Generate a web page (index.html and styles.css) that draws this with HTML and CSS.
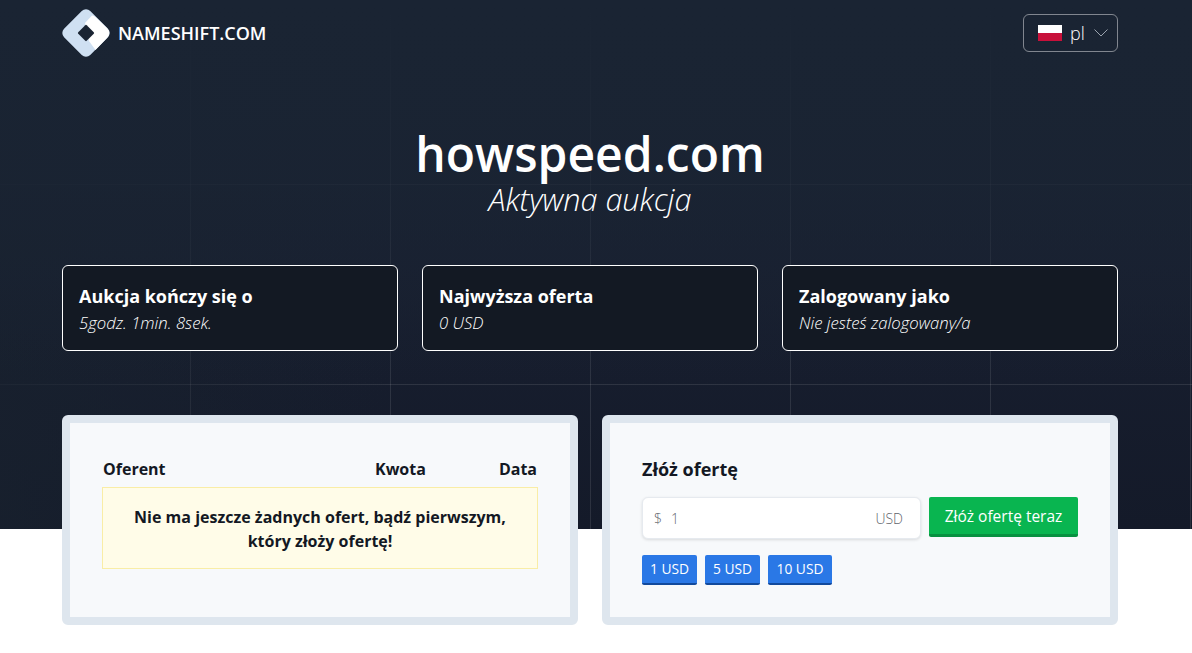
FILE: index.html
```html
<!DOCTYPE html>
<html lang="pl">
<head>
    <meta charset="UTF-8">
    <meta name="viewport" content="width=device-width, initial-scale=1.0">
    <title>howspeed.com - Aktywna aukcja</title>
    <link rel="stylesheet" href="styles.css">
</head>
<body>
    <div class="page">
        <header class="topbar">
            <a class="logo" href="#">
                <svg class="logo-mark" width="48" height="48" viewBox="0 0 48 48">
                    <rect x="5.5" y="5.5" width="37" height="37" rx="6" transform="rotate(45 24 24)" fill="#cfe0f2"/>
                    <path d="M30 6.5 L23 14 L27 32 L33.5 41 L45 29 Q49.5 24 45 19 L34 8.5 Q32 6.5 30 6.5 Z" fill="#ffffff"/>
                    <rect x="18" y="18" width="12" height="12" rx="1" transform="rotate(45 24 24)" fill="#1a2433"/>
                </svg>
                <span class="logo-text">NAMESHIFT.COM</span>
            </a>
            <div class="lang">
                <span class="flag"></span>
                <span class="lang-code">pl</span>
                <svg class="chevron" width="14" height="8" viewBox="0 0 14 8">
                    <path d="M0.5 0.5 L7 7 L13.5 0.5" fill="none" stroke="#9aa3ae" stroke-width="1"/>
                </svg>
            </div>
        </header>

        <section class="headline">
            <h1 class="domain">howspeed.com</h1>
            <p class="status">Aktywna aukcja</p>
        </section>

        <section class="cards">
            <div class="card">
                <h3>Aukcja kończy się o</h3>
                <p>5godz. 1min. 8sek.</p>
            </div>
            <div class="card">
                <h3>Najwyższa oferta</h3>
                <p>0 USD</p>
            </div>
            <div class="card">
                <h3>Zalogowany jako</h3>
                <p>Nie jesteś zalogowany/a</p>
            </div>
        </section>

        <section class="panels">
            <div class="panel">
                <div class="bids-head">
                    <span class="col-name">Oferent</span>
                    <span class="col-amount">Kwota</span>
                    <span class="col-date">Data</span>
                </div>
                <div class="no-bids">Nie ma jeszcze żadnych ofert, bądź pierwszym, który złoży ofertę!</div>
            </div>
            <div class="panel">
                <h2 class="bid-title">Złóż ofertę</h2>
                <form class="bid-form">
                    <div class="bid-input">
                        <span class="currency">$</span>
                        <span class="placeholder">1</span>
                        <span class="unit">USD</span>
                    </div>
                    <button type="button" class="btn-bid">Złóż ofertę teraz</button>
                </form>
                <div class="quick-bids">
                    <button type="button" class="btn-quick">1 USD</button>
                    <button type="button" class="btn-quick">5 USD</button>
                    <button type="button" class="btn-quick">10 USD</button>
                </div>
            </div>
        </section>
    </div>
</body>
</html>
```

FILE: styles.css
```css
/* Global Styling */
* {
    margin: 0;
    padding: 0;
    box-sizing: border-box;
    font-family: "Open Sans", sans-serif;
}

body {
    background: #ffffff;
    overflow: hidden;
}

/* Dark hero behind the top of the page. The 200px grid fades out to the top and left */
.page {
    height: 653px;
    padding: 0 74px 0 62px;
    background-color: #ffffff;
    background-image:
        linear-gradient(180deg, #1a2433 0, rgba(26, 36, 51, 0.75) 184px, rgba(26, 36, 51, 0) 384px),
        linear-gradient(90deg, rgba(24, 33, 46, 0.75) 0, rgba(24, 33, 46, 0) 390px),
        repeating-linear-gradient(90deg, transparent 0, transparent 190px, rgba(255, 255, 255, 0.1) 190px, rgba(255, 255, 255, 0.1) 191px, transparent 191px, transparent 200px),
        repeating-linear-gradient(180deg, transparent 0, transparent 184px, rgba(255, 255, 255, 0.1) 184px, rgba(255, 255, 255, 0.1) 185px, transparent 185px, transparent 200px),
        linear-gradient(180deg, #1a2433 0%, #181f30 50%, #141a29 100%);
    background-size: 100% 529px;
    background-repeat: no-repeat;
}

/* Top bar */
.topbar {
    display: flex;
    justify-content: space-between;
    align-items: flex-start;
    padding-top: 9px;
}

.logo {
    display: flex;
    align-items: center;
    gap: 8px;
    text-decoration: none;
}

.logo-mark {
    overflow: visible;
}

.logo-text {
    font-size: 18px;
    font-weight: 600;
    color: #ffffff;
}

.lang {
    display: flex;
    align-items: center;
    width: 95px;
    height: 38px;
    margin-top: 5px;
    padding-left: 14px;
    border: 1px solid rgba(255, 255, 255, 0.45);
    border-radius: 6px;
}

.flag {
    width: 24px;
    height: 16px;
    background: linear-gradient(180deg, #ffffff 50%, #c8103a 50%);
}

.lang-code {
    margin-left: 8px;
    font-size: 18px;
    font-weight: 300;
    color: #ffffff;
}

.chevron {
    margin-left: 9px;
}

/* Title */
.headline {
    margin-top: 69px;
    text-align: center;
    color: #ffffff;
}

.domain {
    font-size: 48px;
    font-weight: 600;
    line-height: 56px;
}

.status {
    font-size: 30.6px;
    font-weight: 300;
    font-style: italic;
    line-height: 34px;
    padding-bottom: 2px;
}

/* Info cards */
.cards {
    display: grid;
    grid-template-columns: repeat(3, 1fr);
    gap: 24px;
    margin-top: 47px;
}

.card {
    height: 86px;
    padding: 18px 16px 0;
    background: #131923;
    border: 1px solid #ffffff;
    border-radius: 6px;
    color: #ffffff;
}

.card h3 {
    font-size: 18px;
    font-weight: 700;
    line-height: 24px;
}

.card p {
    font-size: 16.7px;
    font-weight: 300;
    font-style: italic;
    line-height: 30px;
}

/* Panels */
.panels {
    display: grid;
    grid-template-columns: repeat(2, 1fr);
    gap: 24px;
    margin-top: 64px;
}

.panel {
    height: 210px;
    background: #f7f9fb;
    border: 8px solid #dee6ee;
    border-radius: 6px;
    padding: 32px;
    color: #131823;
}

.bids-head {
    display: flex;
    padding: 0 1px 4px;
    font-size: 16px;
    font-weight: 700;
    line-height: 28px;
}

.col-name {
    flex: 1;
}

.col-amount {
    margin-right: 73px;
}

.no-bids {
    padding: 17px 24px 15px;
    background: #fffce8;
    border: 1px solid #f9eda6;
    font-size: 16px;
    font-weight: 700;
    line-height: 24px;
    text-align: center;
}

/* Bid form */
.bid-title {
    font-size: 18px;
    font-weight: 700;
    line-height: 28px;
}

.bid-form {
    display: flex;
    gap: 8px;
    margin-top: 14px;
}

.bid-input {
    display: flex;
    align-items: center;
    width: 279px;
    height: 42px;
    padding: 0 17px 0 11px;
    background: #ffffff;
    border: 1px solid #e6eaef;
    border-radius: 6px;
    box-shadow: 0 1px 3px rgba(0, 0, 0, 0.12);
    font-size: 14px;
    font-weight: 300;
    color: #5f656c;
}

.placeholder {
    flex: 1;
    margin-left: 9px;
}

.btn-bid {
    width: 149px;
    height: 40px;
    background: #09b550;
    border: none;
    border-bottom: 3px solid #079140;
    border-radius: 2px;
    font-size: 15.5px;
    color: #ffffff;
}

.quick-bids {
    display: flex;
    gap: 8px;
    margin-top: 16px;
}

.btn-quick {
    width: 55px;
    height: 30px;
    padding-bottom: 2px;
    background: #2a78e6;
    border: none;
    border-bottom: 2px solid #124a9c;
    border-radius: 2px;
    font-size: 13.8px;
    color: #ffffff;
}

.btn-quick:last-child {
    width: 64px;
}
```
